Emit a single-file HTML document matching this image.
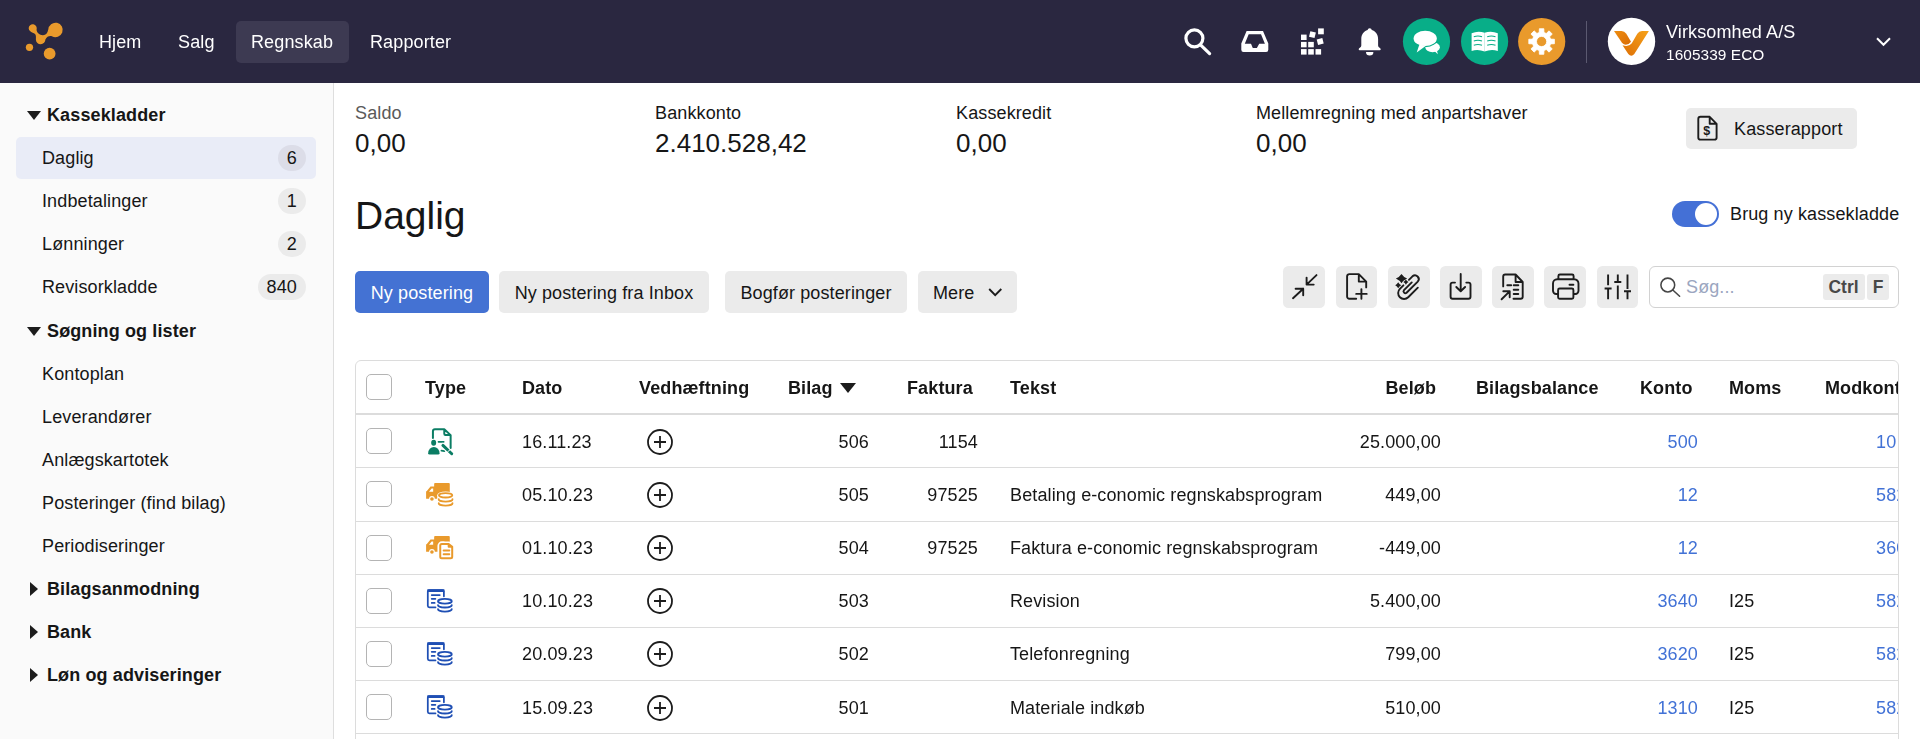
<!DOCTYPE html>
<html lang="da">
<head>
<meta charset="utf-8">
<title>Daglig - Kassekladder</title>
<style>
*{box-sizing:border-box;margin:0;padding:0}
html,body{width:1920px;height:739px;overflow:hidden;background:#fff}
body{font-family:"Liberation Sans",sans-serif;font-size:18px;color:#161616;letter-spacing:.12px;position:relative}
/* ---------- top bar ---------- */
#top{will-change:transform;position:absolute;left:0;top:0;width:1920px;height:83px;background:#2a2740}
#logo{position:absolute;left:20px;top:15px}
.nav{position:absolute;top:21px;height:42px;line-height:42px;padding:0 15px;color:#fff;font-size:18px;border-radius:5px;white-space:nowrap}
.nav.on{background:#3d3a52}
.tico{position:absolute}
.circ{position:absolute;top:18px;width:47px;height:47px;border-radius:50%}
#vdiv{position:absolute;left:1586px;top:21px;width:1px;height:42px;background:#5b5970}
#cname{position:absolute;left:1666px;top:21px;color:#fff;font-size:18px;line-height:22px;white-space:nowrap}
#cid{position:absolute;left:1666px;top:45px;color:#fff;font-size:15.4px;letter-spacing:.08px;line-height:20px;white-space:nowrap}
/* ---------- sidebar ---------- */
#side{position:absolute;left:0;top:83px;width:334px;height:656px;background:#fafafa;border-right:1px solid #dedede}
.sh,.si{position:absolute;left:16px;width:300px;height:42px;line-height:42px;white-space:nowrap;border-radius:5px}
.sh{font-weight:bold;padding-left:31px}
.si{padding-left:26px}
.si.on{background:#e9ecf7}
.sh i{position:absolute;left:11px;top:16.5px;width:0;height:0;border-left:7px solid transparent;border-right:7px solid transparent;border-top:9px solid #1c1c1c}
.sh i.r{left:14px;top:13.5px;border-top:7px solid transparent;border-bottom:7px solid transparent;border-left:8.5px solid #1c1c1c;border-right:none}
.bd{position:absolute;right:10px;top:8px;height:26px;min-width:28px;padding:0 9px;line-height:26px;border-radius:13px;background:#ebebeb;text-align:center}
.on .bd{background:#dcdde8}
/* ---------- main ---------- */
.lab{position:absolute;top:102px;line-height:22px;white-space:nowrap}
.val{position:absolute;top:127px;font-size:26px;line-height:32px;white-space:nowrap;letter-spacing:0}
.btn{position:absolute;top:271px;height:42px;line-height:44px;border-radius:5px;background:#ebebeb;white-space:nowrap;text-align:center}
.btn.pri{background:#4472d3;color:#fff}
.ib{position:absolute;top:266px;width:42px;height:42px;border-radius:5px;background:#ebebeb}
.ib svg{position:absolute;left:7px;top:7px}
h1{position:absolute;left:355px;top:192px;font-size:39px;line-height:48px;font-weight:normal;letter-spacing:0}
#tbl{will-change:transform;position:absolute;left:355px;top:360px;width:1544px;height:400px;border:1px solid #dcdcdc;border-radius:6px;overflow:hidden}
.hr{position:absolute;left:0;top:0;width:1600px;height:54px;border-bottom:2px solid #dcdcdc;font-weight:bold}
.tr{position:absolute;left:0;width:1600px;height:53px;border-bottom:1px solid #dcdcdc}
.c{position:absolute;top:1px;height:52px;line-height:52px;white-space:nowrap}
.hr .c{height:52px;line-height:52px}
.r{text-align:right}
.a{color:#4272d6}
.ti{position:absolute;left:64px;top:9px}
.plus{position:absolute;left:289.6px;top:13px}
.sort{position:absolute;left:52px;top:21px;width:0;height:0;border-left:8px solid transparent;border-right:8px solid transparent;border-top:10px solid #1c1c1c}
.u .c{top:0}.u .plus{top:12px}.u .ti,.v .ti{top:8px}
.cb{position:absolute;left:10px;top:13px;width:26px;height:26px;border:1px solid #b4b4b4;border-radius:5px;background:#fff}
</style>
</head>
<body>
<div id="top">
  <svg id="logo" width="50" height="50" viewBox="0 0 739 739"><g fill="#e99a2c"><path d="M128 195 A60 60 0 1 1 245 215 C246 248 268 296 340 298 C385 298 405 270 418 215 A107 107 0 1 1 471 313 C430 305 395 322 375 362 A70 70 0 1 1 235 365 C236 322 242 288 205 270 C185 260 170 255 160 248 A60 60 0 0 1 128 195 Z"/><circle cx="140" cy="478" r="54"/><circle cx="438" cy="572" r="87"/></g></svg>
  <div class="nav" style="left:84px">Hjem</div>
  <div class="nav" style="left:163px">Salg</div>
  <div class="nav on" style="left:236px;width:113px">Regnskab</div>
  <div class="nav" style="left:355px">Rapporter</div>
  <svg class="tico" style="left:1180px;top:24px" width="36" height="36" viewBox="1180 24 36 36"><circle cx="1194.4" cy="38.3" r="8.5" fill="none" stroke="#fff" stroke-width="3.2"/><path d="M1200.8 45.2 L1209.6 53.6" stroke="#fff" stroke-width="3.2" stroke-linecap="round"/></svg>
  <svg class="tico" style="left:1238px;top:26px" width="34" height="30" viewBox="1238 26 34 30"><path fill="#fff" fill-rule="evenodd" d="M1246.6 31 H1263 L1268.3 43.6 V49.8 a2.2 2.2 0 0 1 -2.2 2.2 H1243.5 a2.2 2.2 0 0 1 -2.2 -2.2 V43.6 Z M1248.7 34.2 L1244.8 43.7 H1251 L1252.8 48 H1256.9 L1259.2 43.7 H1264.9 L1261 34.2 Z"/></svg>
  <svg class="tico" style="left:1298px;top:24px" width="30" height="34" viewBox="1298 24 30 34"><g fill="#fff"><rect x="1301" y="34.6" width="5.6" height="5.4"/><rect x="1301" y="41.9" width="5.6" height="5.4"/><rect x="1308.2" y="41.9" width="5.6" height="5.4"/><rect x="1301" y="49.1" width="5.6" height="5.5"/><rect x="1308.2" y="49.1" width="5.6" height="5.5"/><rect x="1315.5" y="49.1" width="5.6" height="5.5"/><rect x="1318.1" y="28.4" width="5.7" height="5.9"/><rect x="1309.6" y="31.8" width="5.7" height="5.7" transform="rotate(14 1312.5 34.6)"/><rect x="1317.3" y="38.6" width="5.8" height="5.8" transform="rotate(-14 1320.2 41.5)"/></g></svg>
  <svg class="tico" style="left:1355px;top:24px" width="30" height="36" viewBox="1355 24 30 36"><g fill="#fff"><path d="M1369.7 28.2 c1.2 0 1.9 .8 2.1 1.9 c3.8 1.2 6.3 4.4 6.3 8.9 v6.3 c0 1.2 .5 1.9 1.5 2.5 c.8 .5 1.1 1 1.1 1.6 c0 .5 -.4 .8 -1 .8 h-20 c-.6 0 -1 -.3 -1 -.8 c0 -.6 .3 -1.1 1.1 -1.6 c1 -.6 1.5 -1.3 1.5 -2.5 V39 c0 -4.500 2.500 -7.700 6.300 -8.900 c.2 -1.100 .9 -1.900 2.100 -1.900 z"/><path d="M1366 51.900 h7.400 a3.700 3.500 0 0 1 -7.400 0 z"/></g></svg>
  <svg class="tico" style="left:1400px;top:15px" width="170" height="53" viewBox="1400 15 170 53">
    <circle cx="1426.5" cy="41.5" r="23.6" fill="#08ae88"/>
    <circle cx="1484.6" cy="41.5" r="23.6" fill="#08ae88"/>
    <circle cx="1541.7" cy="41.5" r="23.6" fill="#e99a2c"/>
    <g fill="#fff">
      <ellipse cx="1432.6" cy="47.3" rx="7.3" ry="5"/>
      <path d="M1434.5 51 L1437.8 54.200 L1436.8 49.500 Z"/>
      <ellipse cx="1425.2" cy="38.4" rx="12.7" ry="8.8" fill="#08ae88"/>
      <ellipse cx="1425.2" cy="38.4" rx="11.6" ry="7.700"/>
      <path d="M1419.4 44.500 L1416.7 52.400 L1426 45.800 Z"/>
      <path d="M1471.600 33.300 Q1478 30.300 1484.700 32.800 V51.600 Q1478 48.800 1471.600 51 Z M1497.800 33.300 Q1491.300 30.300 1484.500 32.800 V51.600 Q1491.300 48.800 1497.800 51 Z"/>
    </g>
    <g fill="none" stroke="#08ae88" stroke-width="1.100">
      <path d="M1473.800 36.700 Q1478 35.200 1482 36.700 M1473.800 41 Q1478 39.500 1482 41 M1473.800 45.300 Q1478 43.800 1482 45.300"/>
      <path d="M1487.200 36.700 Q1491.300 35.200 1495.500 36.700 M1487.200 41 Q1491.300 39.500 1495.500 41 M1487.200 45.300 Q1491.300 43.800 1495.500 45.300"/>
    </g>
    <path fill="#fff" fill-rule="evenodd" stroke="#fff" stroke-width="0.8" stroke-linejoin="round" d="M1539.22 32.51 L1539.36 28.69 L1543.84 28.69 L1543.98 32.51 L1546.27 33.46 L1549.08 30.86 L1552.24 34.02 L1549.64 36.83 L1550.59 39.12 L1554.41 39.26 L1554.41 43.74 L1550.59 43.88 L1549.64 46.17 L1552.24 48.98 L1549.08 52.14 L1546.27 49.54 L1543.98 50.49 L1543.84 54.31 L1539.36 54.31 L1539.22 50.49 L1536.93 49.54 L1534.12 52.14 L1530.96 48.98 L1533.56 46.17 L1532.61 43.88 L1528.79 43.74 L1528.79 39.26 L1532.61 39.12 L1533.56 36.83 L1530.96 34.02 L1534.12 30.86 L1536.93 33.46 Z M1536.50 41.50 a5.10 5.10 0 1 0 10.20 0 a5.10 5.10 0 1 0 -10.20 0 Z"/>
  </svg>
  <div id="vdiv"></div>
  <svg class="tico" style="left:1604px;top:14px" width="56" height="56" viewBox="1604 14 56 56">
    <defs><linearGradient id="vg" x1="0" y1="1" x2="1" y2="0"><stop offset="0" stop-color="#dd6f05"/><stop offset="1" stop-color="#f6a21b"/></linearGradient>
    <linearGradient id="vg2" x1="0" y1="0" x2="1" y2="1"><stop offset="0" stop-color="#ee8d10"/><stop offset="1" stop-color="#d96c06"/></linearGradient></defs>
    <circle cx="1631.500" cy="41.400" r="23.700" fill="#fff"/>
    <path fill="url(#vg2)" d="M1614 30.900 H1621.500 Q1624.500 30.900 1626.300 33.800 L1631 41.800 Q1628.500 45.300 1624.600 44.600 Q1623 44.200 1621.800 42.600 Z"/>
    <path fill="url(#vg)" d="M1648.900 30.900 H1642 Q1639 30.900 1637.300 33.800 L1631.800 43.300 Q1628.500 47.600 1622.500 45.300 L1628.300 54 Q1631.300 57.400 1634.300 54 Z"/>
  </svg>
  <svg class="tico" style="left:1872px;top:32px" width="22" height="18" viewBox="1872 32 22 18"><path d="M1877 38.300 L1883.500 44.800 L1890 38.300" fill="none" stroke="#fff" stroke-width="2"/></svg>
  <div id="cname">Virksomhed A/S</div>
  <div id="cid">1605339 ECO</div>
</div>

<div id="side">
  <div class="sh" style="top:11px"><i></i>Kassekladder</div>
  <div class="si on" style="top:54px">Daglig<span class="bd">6</span></div>
  <div class="si" style="top:97px">Indbetalinger<span class="bd">1</span></div>
  <div class="si" style="top:140px">Lønninger<span class="bd">2</span></div>
  <div class="si" style="top:183px">Revisorkladde<span class="bd">840</span></div>
  <div class="sh" style="top:227px"><i></i>Søgning og lister</div>
  <div class="si" style="top:270px">Kontoplan</div>
  <div class="si" style="top:313px">Leverandører</div>
  <div class="si" style="top:356px">Anlægskartotek</div>
  <div class="si" style="top:399px">Posteringer (find bilag)</div>
  <div class="si" style="top:442px">Periodiseringer</div>
  <div class="sh" style="top:485px"><i class="r"></i>Bilagsanmodning</div>
  <div class="sh" style="top:528px"><i class="r"></i>Bank</div>
  <div class="sh" style="top:571px"><i class="r"></i>Løn og adviseringer</div>
</div>

<div class="lab" style="left:355px;color:#5a5a5a">Saldo</div>
<div class="val" style="left:355px">0,00</div>
<div class="lab" style="left:655px">Bankkonto</div>
<div class="val" style="left:655px">2.410.528,42</div>
<div class="lab" style="left:956px">Kassekredit</div>
<div class="val" style="left:956px">0,00</div>
<div class="lab" style="left:1256px">Mellemregning med anpartshaver</div>
<div class="val" style="left:1256px">0,00</div>

<div class="btn" style="left:1686px;top:108px;width:171px;height:41px;line-height:42px;text-align:left;padding-left:48px">Kasserapport<svg style="position:absolute;left:8px;top:4px" width="28" height="34" viewBox="1694 112 28 34"><path d="M1700.500 116.800 H1709.700 L1716.600 123.800 V137.400 a2.200 2.200 0 0 1 -2.200 2.200 H1700.500 a2.200 2.200 0 0 1 -2.200 -2.200 V119 a2.200 2.200 0 0 1 2.200 -2.200 Z M1709.700 116.800 V123.800 H1716.600" fill="none" stroke="#1c1c1c" stroke-width="1.900" stroke-linejoin="round"/><text x="1706.800" y="134.800" font-size="12.500" font-weight="bold" text-anchor="middle" fill="#1c1c1c" font-family="Liberation Sans,sans-serif">$</text></svg></div>

<h1>Daglig</h1>
<div id="tog" style="position:absolute;left:1672px;top:201px;width:47px;height:26px;border-radius:13px;background:#4470d6"><div style="position:absolute;right:2px;top:2px;width:22px;height:22px;border-radius:50%;background:#fff"></div></div>
<div style="position:absolute;left:1730px;top:203px;line-height:22px;white-space:nowrap">Brug ny kassekladde</div>

<div class="btn pri" style="left:355px;width:134px">Ny postering</div>
<div class="btn" style="left:499px;width:210px">Ny postering fra Inbox</div>
<div class="btn" style="left:725px;width:182px">Bogfør posteringer</div>
<div class="btn" style="left:918px;width:99px;text-align:left;padding-left:15px">Mere<svg style="position:absolute;left:66px;top:13px" width="22" height="16" viewBox="984 284 22 16"><path d="M989.200 289 L995.200 295.100 L1001.300 289" fill="none" stroke="#1c1c1c" stroke-width="1.900"/></svg></div>

<svg id="tb" style="position:absolute;left:1280px;top:262px" width="364" height="50" viewBox="1280 262 364 50">
  <g fill="#ebebeb">
    <rect x="1283" y="266" width="42" height="42" rx="5.500"/><rect x="1336" y="266" width="41" height="42" rx="5.500"/><rect x="1388" y="266" width="42" height="42" rx="5.500"/><rect x="1440" y="266" width="42" height="42" rx="5.500"/><rect x="1492" y="266" width="42" height="42" rx="5.500"/><rect x="1544" y="266" width="42" height="42" rx="5.500"/><rect x="1597" y="266" width="41" height="42" rx="5.500"/>
  </g>
  <g fill="none" stroke="#1c1c1c" stroke-width="1.9" stroke-linecap="round" stroke-linejoin="round">
    <path d="M1316.500 275.100 L1306.600 284.600 M1306.600 277.600 V284.600 H1313.700 M1293 298.200 L1303.200 288.700 M1295.600 288.700 H1303.200 V295.300"/>
    <path d="M1356.200 298.700 H1349.300 a2.200 2.200 0 0 1 -2.200 -2.200 V276.300 a2.200 2.200 0 0 1 2.200 -2.200 H1358.800 L1366.200 281.600 V287.400 M1358.800 274.100 V281.600 H1366.200 M1356.200 293.900 H1366.700 M1361.400 289.100 V298.700"/>
    <g transform="matrix(.7071 -.7071 .7071 .7071 1388 266)"><path d="M5.800 36.400 L-7.800 36.400 A5.900 5.900 0 0 1 -7.800 24.600 L-2.800 24.600 M5 24.600 L10 24.600 A3.730 3.730 0 0 1 10 32.050 L-5.800 32.050 A1.830 1.830 0 0 1 -5.800 28.400 L5.200 28.400"/></g>
    <path d="M1460.700 273.900 V291 M1456.300 287 L1460.700 291.300 L1465.100 287 M1455 282.600 H1452.600 a2 2 0 0 0 -2 2 V296.800 a2 2 0 0 0 2 2 H1468.500 a2 2 0 0 0 2 -2 V284.600 a2 2 0 0 0 -2 -2 H1466.300"/>
    <path d="M1503.200 286.400 V276.500 a2 2 0 0 1 2 -2 H1515.600 L1522.700 282 V296.800 a2 2 0 0 1 -2 2 H1513.500 M1515.600 274.500 V282 H1522.700 M1507.300 285.300 H1511.200 M1513.700 285.300 H1518.300 M1513.700 289.700 H1518.300 M1513.700 294 H1518.300 M1501.600 299.300 L1509.600 291.400 M1503.300 291.300 H1509.700 V297.200"/>
    <path d="M1558.400 279.300 V276 a1.500 1.500 0 0 1 1.500 -1.500 H1572.100 a1.500 1.500 0 0 1 1.500 1.500 V279.300 M1558.100 294 H1556.200 a3.200 3.200 0 0 1 -3.200 -3.200 V283.500 a4.200 4.200 0 0 1 4.200 -4.200 H1574.300 a4.200 4.200 0 0 1 4.200 4.200 V290.800 a3.200 3.200 0 0 1 -3.200 3.200 H1573.400 M1559.600 288.500 H1571.900 a1.500 1.500 0 0 1 1.500 1.500 V297.300 a1.500 1.500 0 0 1 -1.500 1.500 H1559.600 a1.500 1.500 0 0 1 -1.500 -1.500 V290 a1.500 1.500 0 0 1 1.500 -1.500 Z M1569.500 284.750 H1573.400"/>
    <path stroke-linecap="butt" d="M1608.100 274.600 V285.200 M1604.600 288.500 H1611.600 M1608.100 288.500 V299.300 M1617.800 274.600 V282 M1614.300 282 H1621.300 M1617.800 285.400 V299.300 M1627.500 274.600 V288.900 M1624 291.300 H1631 M1627.500 291.300 V299.300"/>
  </g>
  <g fill="#1c1c1c"><path d="M1401.50 273.90 Q1403.52 276.91 1407.10 278.60 Q1403.52 280.29 1401.50 283.30 Q1399.48 280.29 1395.90 278.60 Q1399.48 276.91 1401.50 273.90 Z"/><path d="M1405.90 279.50 Q1406.84 281.16 1408.50 282.10 Q1406.84 283.04 1405.90 284.70 Q1404.96 283.04 1403.30 282.10 Q1404.96 281.16 1405.90 279.50 Z"/><path d="M1398.20 282.30 Q1399.28 284.22 1401.20 285.30 Q1399.28 286.38 1398.20 288.30 Q1397.12 286.38 1395.20 285.30 Q1397.12 284.22 1398.20 282.30 Z"/></g>
</svg>
<div id="srch" style="position:absolute;left:1649px;top:266px;width:250px;height:42px;border:1px solid #d2d2d2;border-radius:6px;background:#fff">
  <svg style="position:absolute;left:7px;top:7px" width="28" height="28" viewBox="1657 274 28 28"><circle cx="1667.800" cy="285" r="6.900" fill="none" stroke="#454545" stroke-width="1.550"/><path d="M1672.800 290 L1679.600 296.200" stroke="#454545" stroke-width="1.550" stroke-linecap="round"/></svg>
  <span style="position:absolute;left:36px;top:0;line-height:40px;color:#9ba6c0">Søg...</span>
  <span style="position:absolute;left:173px;top:7px;width:42px;height:26px;line-height:27px;background:#ebebeb;border-radius:3px;text-align:center;padding-right:1px;font-weight:bold;color:#484848;font-size:17.500px;letter-spacing:0">Ctrl</span>
  <span style="position:absolute;left:217px;top:7px;width:22px;height:26px;line-height:27px;background:#ebebeb;border-radius:3px;text-align:center;font-weight:bold;color:#484848;font-size:17.500px;letter-spacing:0">F</span>
</div>

<div id="tbl">
  <div class="hr">
    <div class="cb"></div>
    <div class="c" style="left:69px">Type</div>
    <div class="c" style="left:166px">Dato</div>
    <div class="c" style="left:283px">Vedhæftning</div>
    <div class="c" style="left:432px">Bilag<i class="sort"></i></div>
    <div class="c" style="left:551px">Faktura</div>
    <div class="c" style="left:654px">Tekst</div>
    <div class="c r" style="left:980px;width:100px">Beløb</div>
    <div class="c" style="left:1120px">Bilagsbalance</div>
    <div class="c" style="left:1284px">Konto</div>
    <div class="c" style="left:1373px">Moms</div>
    <div class="c" style="left:1469px">Modkonto</div>
  </div>
  <div class="tr" style="top:54px;height:53px">
    <div class="cb"></div>
    <svg class="ti" width="40" height="36" viewBox="0 0 40 36">
  <path d="M12.93 13.90 V7.34 a2 2 0 0 1 2 -2 H24.29 L30.63 11.12 V23.90 M24.29 5.46 V9.76 a1.200 1.200 0 0 0 1.200 1.200 H30.24" fill="none" stroke="#0b7d64" stroke-width="2" stroke-linecap="round" stroke-linejoin="round"/>
  <path d="M18.54 17.80 H23.66 M21.46 26.73 L24.39 27.12" fill="none" stroke="#0b7d64" stroke-width="1.800" stroke-linecap="round"/>
  <ellipse cx="13.66" cy="18.78" rx="2.500" ry="3" fill="#0b7d64"/>
  <path d="M8.15 29.27 a5.700 6.300 0 0 1 11.400 0 q0 1.200 -1.400 1.200 h-8.600 q-1.400 0 -1.400 -1.200 z" fill="#0b7d64"/>
  <path d="M22.93 21.46 L31.71 29.76" stroke="#fff" stroke-width="5" stroke-linecap="round"/>
  <path d="M22.93 21.46 L31.71 29.76" stroke="#0b7d64" stroke-width="3" stroke-linecap="round"/>
  <path d="M27.32 28.05 L30.24 25.61" stroke="#fff" stroke-width="1"/>
    </svg>
    <div class="c" style="left:166px">16.11.23</div>
    <svg class="plus" width="28" height="28" viewBox="0 0 28 28"><circle cx="14" cy="14" r="12" fill="none" stroke="#1c1c1c" stroke-width="1.8"/><path d="M14 8v12M8 14h12" stroke="#1c1c1c" stroke-width="1.8" fill="none"/></svg>
    <div class="c r" style="left:413px;width:100px">506</div>
    <div class="c r" style="left:522px;width:100px">1154</div>
    <div class="c" style="left:654px"></div>
    <div class="c r" style="left:935px;width:150px">25.000,00</div>
    <div class="c r a" style="left:1242px;width:100px">500</div>
    <div class="c" style="left:1373px"></div>
    <div class="c a" style="left:1520px">10</div>
  </div>
  <div class="tr" style="top:107px;height:54px">
    <div class="cb"></div>
    <svg class="ti" width="40" height="36" viewBox="0 0 40 36">
  <path fill="#e99a2c" fill-rule="evenodd" d="M15.12 6.10 H28.88 a.900 .900 0 0 1 .900 .900 V21.71 H6.10 V14.15 H6.68 L10.49 9.51 H14.15 V6.98 a.900 .900 0 0 1 .900 -.900 Z M9.02 14.63 L11.61 11.46 H13.17 V14.63 Z"/>
  <circle cx="11.95" cy="21.95" r="2.900" fill="#fff"/><circle cx="11.95" cy="21.95" r="1.800" fill="#e99a2c"/>
  <path d="M17.21 18.29 V26.34 a8.400 3.800 0 0 0 16.800 0 V18.29 a8.400 3.800 0 0 0 -16.800 0 Z" fill="#fff"/>
  <ellipse cx="25.61" cy="18.29" rx="6.700" ry="2.200" fill="none" stroke="#e99a2c" stroke-width="1.800"/>
  <path d="M18.71 22.20 a6.900 2.400 0 0 0 13.800 0 M18.71 26.24 a6.900 2.400 0 0 0 13.800 0" fill="none" stroke="#e99a2c" stroke-width="1.850" stroke-linecap="round"/>
    </svg>
    <div class="c" style="left:166px">05.10.23</div>
    <svg class="plus" width="28" height="28" viewBox="0 0 28 28"><circle cx="14" cy="14" r="12" fill="none" stroke="#1c1c1c" stroke-width="1.8"/><path d="M14 8v12M8 14h12" stroke="#1c1c1c" stroke-width="1.8" fill="none"/></svg>
    <div class="c r" style="left:413px;width:100px">505</div>
    <div class="c r" style="left:522px;width:100px">97525</div>
    <div class="c" style="left:654px">Betaling e-conomic regnskabsprogram</div>
    <div class="c r" style="left:935px;width:150px">449,00</div>
    <div class="c r a" style="left:1242px;width:100px">12</div>
    <div class="c" style="left:1373px"></div>
    <div class="c a" style="left:1520px">5820</div>
  </div>
  <div class="tr u" style="top:161px;height:53px">
    <div class="cb"></div>
    <svg class="ti" width="40" height="36" viewBox="0 0 40 36">
  <path fill="#e99a2c" fill-rule="evenodd" d="M15.12 6.10 H28.88 a.900 .900 0 0 1 .900 .900 V21.71 H6.10 V14.15 H6.68 L10.49 9.51 H14.15 V6.98 a.900 .900 0 0 1 .900 -.900 Z M9.02 14.63 L11.61 11.46 H13.17 V14.63 Z"/>
  <circle cx="11.95" cy="21.95" r="2.900" fill="#fff"/><circle cx="11.95" cy="21.95" r="1.800" fill="#e99a2c"/>
  <path d="M21.95 13.90 H28.54 L32.20 17.07 V26.34 a2 2 0 0 1 -2 2 H21.95 a2 2 0 0 1 -2 -2 V15.85 a2 2 0 0 1 2 -2 Z" fill="#fff" stroke="#fff" stroke-width="5"/>
  <path d="M21.74 13.90 H28.68 L32.20 16.83 V26.79 a1.500 1.500 0 0 1 -1.500 1.500 H21.74 a1.500 1.500 0 0 1 -1.500 -1.500 V15.40 a1.500 1.500 0 0 1 1.500 -1.500 Z M28.68 13.90 V16.83 H32.20" fill="none" stroke="#e99a2c" stroke-width="2" stroke-linejoin="round"/>
  <path d="M23.66 20.49 H29.27 M23.66 24.29 H29.27" fill="none" stroke="#e99a2c" stroke-width="2" stroke-linecap="round"/>
    </svg>
    <div class="c" style="left:166px">01.10.23</div>
    <svg class="plus" width="28" height="28" viewBox="0 0 28 28"><circle cx="14" cy="14" r="12" fill="none" stroke="#1c1c1c" stroke-width="1.8"/><path d="M14 8v12M8 14h12" stroke="#1c1c1c" stroke-width="1.8" fill="none"/></svg>
    <div class="c r" style="left:413px;width:100px">504</div>
    <div class="c r" style="left:522px;width:100px">97525</div>
    <div class="c" style="left:654px">Faktura e-conomic regnskabsprogram</div>
    <div class="c r" style="left:935px;width:150px">-449,00</div>
    <div class="c r a" style="left:1242px;width:100px">12</div>
    <div class="c" style="left:1373px"></div>
    <div class="c a" style="left:1520px">3600</div>
  </div>
  <div class="tr u" style="top:214px;height:53px">
    <div class="cb"></div>
    <svg class="ti" width="40" height="36" viewBox="0 0 40 36">
  <path d="M15.51 24.39 H9.40 a1.600 1.600 0 0 1 -1.600 -1.600 V8.67 a1.600 1.600 0 0 1 1.600 -1.600 H22.30 a1.600 1.600 0 0 1 1.600 1.600 V13.27" fill="none" stroke="#1f4fb4" stroke-width="1.750" stroke-linecap="round"/>
  <path d="M7.32 7.61 H24.39" stroke="#1f4fb4" stroke-width="2.700" fill="none"/>
  <path d="M11.71 12.10 H19.76 M11.71 15.85 H15.37 M11.71 19.90 H14.63" fill="none" stroke="#1f4fb4" stroke-width="1.750" stroke-linecap="round"/>
  <ellipse cx="24.88" cy="18.29" rx="6.900" ry="2.350" fill="none" stroke="#1f4fb4" stroke-width="1.800"/>
  <path d="M17.98 22.05 a6.900 2.500 0 0 0 13.800 0 M17.98 26.10 a6.900 2.500 0 0 0 13.800 0" fill="none" stroke="#1f4fb4" stroke-width="1.850" stroke-linecap="round"/>
    </svg>
    <div class="c" style="left:166px">10.10.23</div>
    <svg class="plus" width="28" height="28" viewBox="0 0 28 28"><circle cx="14" cy="14" r="12" fill="none" stroke="#1c1c1c" stroke-width="1.8"/><path d="M14 8v12M8 14h12" stroke="#1c1c1c" stroke-width="1.8" fill="none"/></svg>
    <div class="c r" style="left:413px;width:100px">503</div>
    <div class="c r" style="left:522px;width:100px"></div>
    <div class="c" style="left:654px">Revision</div>
    <div class="c r" style="left:935px;width:150px">5.400,00</div>
    <div class="c r a" style="left:1242px;width:100px">3640</div>
    <div class="c" style="left:1373px">I25</div>
    <div class="c a" style="left:1520px">5820</div>
  </div>
  <div class="tr u" style="top:267px;height:53px">
    <div class="cb"></div>
    <svg class="ti" width="40" height="36" viewBox="0 0 40 36">
  <path d="M15.51 24.39 H9.40 a1.600 1.600 0 0 1 -1.600 -1.600 V8.67 a1.600 1.600 0 0 1 1.600 -1.600 H22.30 a1.600 1.600 0 0 1 1.600 1.600 V13.27" fill="none" stroke="#1f4fb4" stroke-width="1.750" stroke-linecap="round"/>
  <path d="M7.32 7.61 H24.39" stroke="#1f4fb4" stroke-width="2.700" fill="none"/>
  <path d="M11.71 12.10 H19.76 M11.71 15.85 H15.37 M11.71 19.90 H14.63" fill="none" stroke="#1f4fb4" stroke-width="1.750" stroke-linecap="round"/>
  <ellipse cx="24.88" cy="18.29" rx="6.900" ry="2.350" fill="none" stroke="#1f4fb4" stroke-width="1.800"/>
  <path d="M17.98 22.05 a6.900 2.500 0 0 0 13.800 0 M17.98 26.10 a6.900 2.500 0 0 0 13.800 0" fill="none" stroke="#1f4fb4" stroke-width="1.850" stroke-linecap="round"/>
    </svg>
    <div class="c" style="left:166px">20.09.23</div>
    <svg class="plus" width="28" height="28" viewBox="0 0 28 28"><circle cx="14" cy="14" r="12" fill="none" stroke="#1c1c1c" stroke-width="1.8"/><path d="M14 8v12M8 14h12" stroke="#1c1c1c" stroke-width="1.8" fill="none"/></svg>
    <div class="c r" style="left:413px;width:100px">502</div>
    <div class="c r" style="left:522px;width:100px"></div>
    <div class="c" style="left:654px">Telefonregning</div>
    <div class="c r" style="left:935px;width:150px">799,00</div>
    <div class="c r a" style="left:1242px;width:100px">3620</div>
    <div class="c" style="left:1373px">I25</div>
    <div class="c a" style="left:1520px">5820</div>
  </div>
  <div class="tr v" style="top:320px;height:53px">
    <div class="cb"></div>
    <svg class="ti" width="40" height="36" viewBox="0 0 40 36">
  <path d="M15.51 24.39 H9.40 a1.600 1.600 0 0 1 -1.600 -1.600 V8.67 a1.600 1.600 0 0 1 1.600 -1.600 H22.30 a1.600 1.600 0 0 1 1.600 1.600 V13.27" fill="none" stroke="#1f4fb4" stroke-width="1.750" stroke-linecap="round"/>
  <path d="M7.32 7.61 H24.39" stroke="#1f4fb4" stroke-width="2.700" fill="none"/>
  <path d="M11.71 12.10 H19.76 M11.71 15.85 H15.37 M11.71 19.90 H14.63" fill="none" stroke="#1f4fb4" stroke-width="1.750" stroke-linecap="round"/>
  <ellipse cx="24.88" cy="18.29" rx="6.900" ry="2.350" fill="none" stroke="#1f4fb4" stroke-width="1.800"/>
  <path d="M17.98 22.05 a6.900 2.500 0 0 0 13.800 0 M17.98 26.10 a6.900 2.500 0 0 0 13.800 0" fill="none" stroke="#1f4fb4" stroke-width="1.850" stroke-linecap="round"/>
    </svg>
    <div class="c" style="left:166px">15.09.23</div>
    <svg class="plus" width="28" height="28" viewBox="0 0 28 28"><circle cx="14" cy="14" r="12" fill="none" stroke="#1c1c1c" stroke-width="1.8"/><path d="M14 8v12M8 14h12" stroke="#1c1c1c" stroke-width="1.8" fill="none"/></svg>
    <div class="c r" style="left:413px;width:100px">501</div>
    <div class="c r" style="left:522px;width:100px"></div>
    <div class="c" style="left:654px">Materiale indkøb</div>
    <div class="c r" style="left:935px;width:150px">510,00</div>
    <div class="c r a" style="left:1242px;width:100px">1310</div>
    <div class="c" style="left:1373px">I25</div>
    <div class="c a" style="left:1520px">5820</div>
  </div>
</div>
</body>
</html>
